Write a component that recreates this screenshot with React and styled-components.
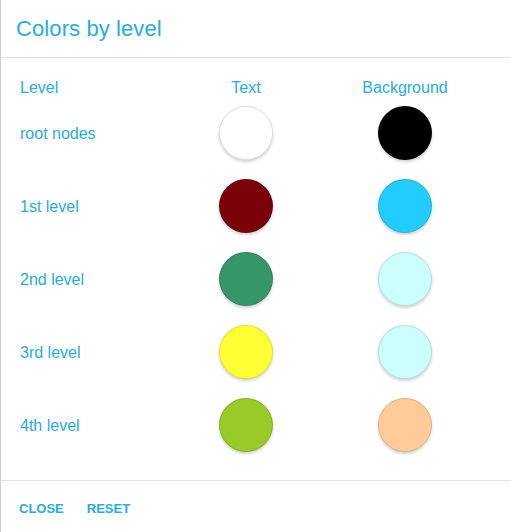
import React from 'react';
import styled, { createGlobalStyle } from 'styled-components';

const GlobalStyle = createGlobalStyle`
	html, body {
		margin: 0;
		padding: 0;
		background: #fff;
	}
	body {
		font-family: "Liberation Sans", Arial, sans-serif;
	}
`;

const accent = '#29abe2';

const Panel = styled.div`
	width: 511px;
	height: 532px;
	box-sizing: border-box;
	border-left: 1px solid #cfcfcf;
	display: flex;
	flex-direction: column;
	color: ${accent};
`;

const Header = styled.div`
	height: 58px;
	box-sizing: border-box;
	border-bottom: 1px solid #e2e2e2;
	display: flex;
	align-items: center;
	padding-left: 15px;
`;

const Title = styled.h1`
	margin: 0;
	padding-top: 1px;
	font-size: 22px;
	font-weight: 300;
	letter-spacing: 0.1px;
`;

const Body = styled.div`
	padding: 18px 0 19px 19px;
	border-bottom: 1px solid #e2e2e2;
`;

const Row = styled.div`
	display: grid;
	grid-template-columns: 199px 54px 105px 54px;
	align-items: center;
	height: ${p => (p.$head ? '20px' : '73px')};
`;

const Label = styled.div`
	padding-top: 3px;
	font-size: 16px;
	white-space: nowrap;
	justify-self: ${p => (p.$center ? 'center' : 'start')};
`;

const Swatch = styled.div`
	width: 54px;
	height: 54px;
	box-sizing: border-box;
	border-radius: 50%;
	background: ${p => p.$color};
	border: 1px solid rgba(0, 0, 0, 0.12);
	box-shadow: 0 2px 3px rgba(0, 0, 0, 0.18);
`;

const Footer = styled.div`
	flex: 1;
	display: flex;
	align-items: center;
	gap: 23px;
	padding-left: 18px;
	padding-top: 4px;
`;

const Action = styled.button`
	border: none;
	background: none;
	padding: 0;
	font-family: "Liberation Sans", Arial, sans-serif;
	font-size: 13px;
	font-weight: bold;
	color: ${accent};
	cursor: pointer;
`;

const levels = [
	{ name: 'root nodes', text: '#ffffff', background: '#000000' },
	{ name: '1st level', text: '#7a0309', background: '#22ccff' },
	{ name: '2nd level', text: '#379669', background: '#ccffff' },
	{ name: '3rd level', text: '#ffff33', background: '#ccffff' },
	{ name: '4th level', text: '#9aca27', background: '#ffcc99' },
];

export default function App() {
	return (
		<>
			<GlobalStyle />
			<Panel>
				<Header>
					<Title>Colors by level</Title>
				</Header>

				<Body>
					<Row $head>
						<Label>Level</Label>
						<Label $center>Text</Label>
						<span />
						<Label $center>Background</Label>
					</Row>
					{levels.map(level => (
						<Row key={level.name}>
							<Label>{level.name}</Label>
							<Swatch $color={level.text} />
							<span />
							<Swatch $color={level.background} />
						</Row>
					))}
				</Body>

				<Footer>
					<Action>CLOSE</Action>
					<Action>RESET</Action>
				</Footer>
			</Panel>
		</>
	);
}
